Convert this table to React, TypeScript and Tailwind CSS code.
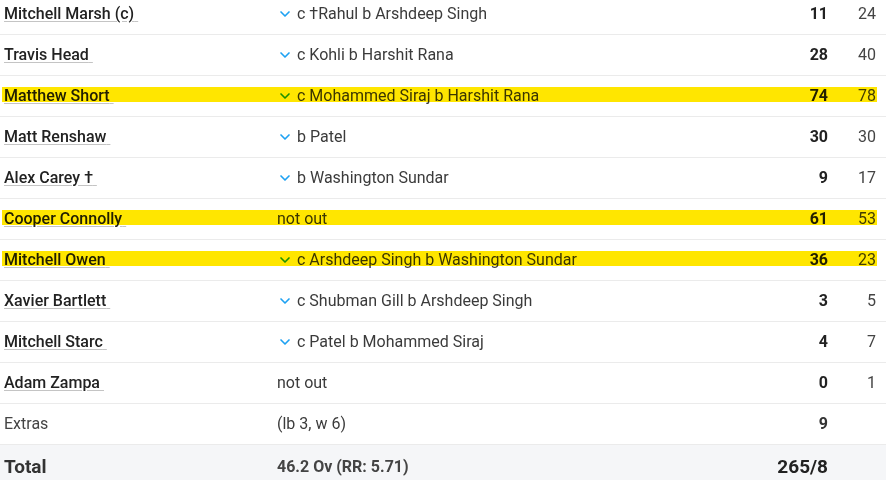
import { ChevronDown } from 'lucide-react'

type Batter = {
  name: string
  dismissal: string
  runs: number
  balls: number
  out: boolean
  hl?: boolean
}

const batters: Batter[] = [
  { name: 'Mitchell Marsh (c)', dismissal: 'c †Rahul b Arshdeep Singh', runs: 11, balls: 24, out: true },
  { name: 'Travis Head', dismissal: 'c Kohli b Harshit Rana', runs: 28, balls: 40, out: true },
  { name: 'Matthew Short', dismissal: 'c Mohammed Siraj b Harshit Rana', runs: 74, balls: 78, out: true, hl: true },
  { name: 'Matt Renshaw', dismissal: 'b Patel', runs: 30, balls: 30, out: true },
  { name: 'Alex Carey †', dismissal: 'b Washington Sundar', runs: 9, balls: 17, out: true },
  { name: 'Cooper Connolly', dismissal: 'not out', runs: 61, balls: 53, out: false, hl: true },
  { name: 'Mitchell Owen', dismissal: 'c Arshdeep Singh b Washington Sundar', runs: 36, balls: 23, out: true, hl: true },
  { name: 'Xavier Bartlett', dismissal: 'c Shubman Gill b Arshdeep Singh', runs: 3, balls: 5, out: true },
  { name: 'Mitchell Starc', dismissal: 'c Patel b Mohammed Siraj', runs: 4, balls: 7, out: true },
  { name: 'Adam Zampa', dismissal: 'not out', runs: 0, balls: 1, out: false },
]

const row = 'relative grid grid-cols-[273px_1fr_60px_48px] items-center h-[41px] pl-1 pr-[10px] border-b border-[#ebebeb]'

export default function App() {
  return (
    <div className="w-[886px] h-[480px] overflow-hidden bg-white font-['Roboto',sans-serif] text-[16px] text-[#3b3b3b]">
      <div className="-mt-[6px]">
        {batters.map((b) => (
          <div key={b.name} className={row}>
            <div className="font-medium text-[#222]">
              <span className="underline decoration-[#c4c4c4] underline-offset-[2px]">
                {b.name}&nbsp;
              </span>
            </div>
            <div className="flex items-center">
              {b.out ? (
                <>
                  <ChevronDown className="w-[16px] h-[16px] mr-[4px] text-[#1da1f2]" strokeWidth={2.5} />
                  <span>{b.dismissal}</span>
                </>
              ) : (
                <span>{b.dismissal}</span>
              )}
            </div>
            <div className="text-right font-bold text-[#222]">{b.runs}</div>
            <div className="text-right text-[#444]">{b.balls}</div>
            {b.hl && (
              <div className="absolute left-[2px] right-[9px] top-[11px] h-[15px] bg-[#ffe600] mix-blend-multiply pointer-events-none" />
            )}
          </div>
        ))}

        <div className={row}>
          <div className="text-[#444]">Extras</div>
          <div>(lb 3, w 6)</div>
          <div className="text-right font-bold text-[#333]">9</div>
          <div />
        </div>

        <div className="grid grid-cols-[273px_1fr_60px_48px] items-center h-[44px] pl-1 pr-[10px] bg-[#f5f6f8]">
          <div className="font-bold text-[19px] text-[#333]">Total</div>
          <div className="font-bold text-[#444]">46.2 Ov (RR: 5.71)</div>
          <div className="text-right font-bold text-[19px] text-[#222]">265/8</div>
          <div />
        </div>
      </div>
    </div>
  )
}
